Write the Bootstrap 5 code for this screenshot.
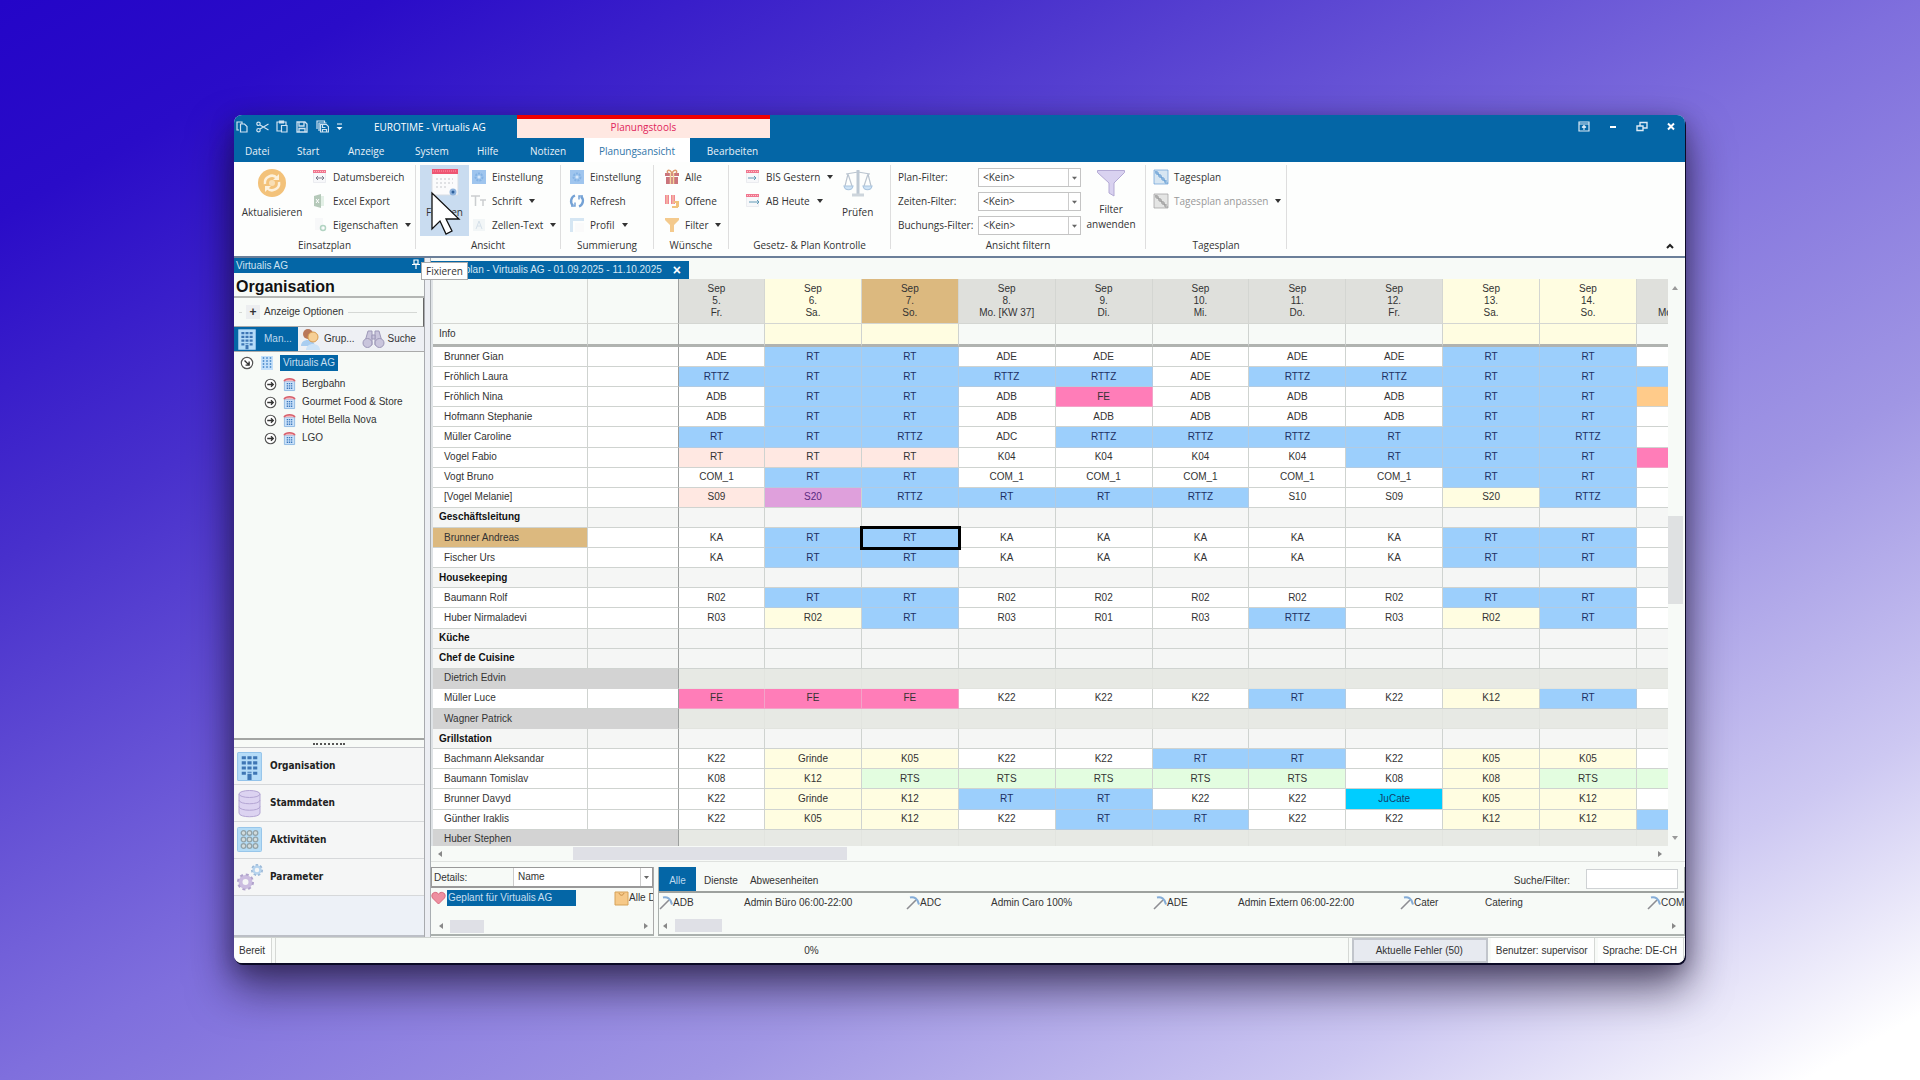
<!DOCTYPE html>
<html lang="de">
<head>
<meta charset="utf-8">
<meta name="viewport" content="width=device-width, initial-scale=1">
<title>EUROTIME - Virtualis AG</title>
<link href="https://cdn.jsdelivr.net/npm/bootstrap@5.3.0/dist/css/bootstrap.min.css" rel="stylesheet">
<style>
:root{--blue:#0466a6;--paper:#f7faf7;--rule:#cfd3d0;--ui:"Open Sans","Noto Sans",sans-serif;--app:"Liberation Sans",Arial,sans-serif}
body{min-height:100vh;height:100vh;padding:115px 235px 117px 234px;overflow:hidden;font:10px/14px var(--ui);color:#333;
 background:linear-gradient(to bottom right,#2405c8 0%,#2a0cc8 10%,#4830cc 26%,#7f6fdd 50%,#a096e4 68%,#cdc8f2 84%,#fff 97%)}
button{font:inherit;color:inherit;border:0;background:none;padding:0}
a{color:inherit;text-decoration:none}
svg{display:block;flex:none}
.win{height:100%;border-radius:8px;background:var(--paper);box-shadow:1px 2px 0 0 #0b0a26,0 24px 44px 2px rgba(20,12,40,.6),0 6px 22px rgba(20,12,40,.35)}
.clip{height:100%;border-radius:8px;overflow:hidden}
.titlebar{height:23px;background:var(--blue);color:#fff}
.quick{width:140px;padding-left:2px;gap:4px}
.quick button{width:16px}
.ctx{width:253px;height:23px;border-top:4px solid #f00000;background:#ffe8e2;color:#e0245c;line-height:16px;margin-left:31px}
.winbtns{gap:13px;padding-right:4px}
.winbtns button{width:16px}
.menus{height:24px;background:var(--blue);color:#e8f1f8;padding-left:11px}
.menus a{line-height:26px}
.menus .on{background:#fff;color:#2f75a8}
.ribbon{height:96px;background:#fdfefd;border-bottom:2px solid #6b7f99;padding-top:3px;color:#333}
.grp{border-right:1px solid #dedede;height:84px}
.grp>.tools{height:73px}
.sm-tool{height:24px;gap:5px;white-space:nowrap}
.sm-tool svg{opacity:.85}
.sm-tool .dn{margin-left:2px}
.big-tool{height:71px;padding-top:3px;line-height:15px;gap:7px}
.dn{width:0;height:0;border:3px solid transparent;border-top:4px solid #333;border-bottom:0;display:inline-block}
.hot{background:#c9dcf0}
.pick{height:19px;width:103px;border:1px solid #c4c4c4;border-radius:0;padding:0 0 0 4px;font:10px/14px var(--ui);color:#333;appearance:none;
 background:#fff url("data:image/svg+xml,%3Csvg xmlns='http://www.w3.org/2000/svg' width='12' height='18'%3E%3Cpath d='M.5 0v18' stroke='%23ccc'/%3E%3Cpath d='M4 8h5l-2.500 3z' fill='%23666'/%3E%3C/svg%3E") right center no-repeat}
.work{font-family:var(--app);line-height:12px}
.side{width:191px;border-right:1px solid #a8aaae}
.strip{height:15px;background:var(--blue);color:#cfe3f2;padding-left:2px;line-height:15px}
.side h1{font:bold 16px/27px var(--app);color:#111;height:25px;padding-left:2px;margin:0;border-bottom:2px solid #b4b6b4}
.opts{height:29px;border-right:1px solid #666;border-bottom:1px solid #aaa;padding:0 6px 0 5px;gap:4px}
.opts i{height:1px;background:#d5d8d5}
.plus{width:14px;height:14px;background:#eceef0;font:bold 12px/13px var(--app)}
.ptabs{height:25px;background:#eef0f4;border-bottom:1px solid #aaa}
.ptabs .on{background:var(--blue);color:#bcd9ef}
.tree{border-bottom:2px solid #a3a5a3;padding-top:2px}
.tree .node{height:18px;gap:6px;padding-left:30px}
.tree .root{padding-left:6px}
.sel{background:var(--blue);color:#c7dff0}
.grip{height:8px;border-bottom:1px solid #c5c7ca}
.grip i{width:32px;border-top:2px dotted #555}
.nav4 a{height:37px;border-bottom:1px solid #d6d8da;background:#f5f6f6;font:bold 10px/14px "DejaVu Sans Condensed","DejaVu Sans",sans-serif;color:#222;padding-left:3px;gap:8px}
.nav-rest{background:#edf1f7;border-bottom:2px solid #bcbfc6}
.gutter{width:6px;background:#eceef3;border-right:1px solid #a9aeb2}
.doctab{height:18px;background:var(--blue);color:#d5e6f3;padding:0 8px 0 1px;gap:11px}
.doctab .close{font:bold 14px/12px var(--app);color:#fff}
.sheet{overflow:hidden;border-left:2px solid #dfe3e6}
.plan{table-layout:fixed;width:100%;height:571px;border-collapse:separate;border-spacing:0}
.plan th,.plan td{border-right:1px solid var(--rule);border-bottom:1px solid var(--rule);padding:0;font-weight:400;overflow:hidden;white-space:nowrap;text-align:center;line-height:12px}
.plan td{background:#fff}
.plan .dayhead th{height:45px;background:#dfe0dc;line-height:12px;padding-bottom:1px;border-color:#d4d6d2}
.plan .dayhead th.side-h{background:var(--paper)}
.plan .dayhead th.we,.plan .info .we{background:#fffde1}
.plan .dayhead th.today{background:#dcb97f}
.plan .info>*{height:23px;border-bottom:3px solid #b0b3b0;background:var(--paper)}
.plan th[scope=row],.plan .info th{text-align:left;padding-left:11px;background:#fff}
.plan .info th{padding-left:6px;background:var(--paper)}
.plan tr>*:nth-child(2){border-right-color:#9da09f}
.plan tr>*:nth-child(3){padding-right:10px}
.plan tr>*:last-child{border-right:0}
.plan .team>*{background:#f5f6f5}
.plan .team th[scope=row]{background:#f5f6f5;font-weight:700;padding-left:6px;color:#111}
.plan .off th[scope=row],.plan .off td:nth-child(2){background:#d3d3d3;border-color:#d3d3d3}
.plan .off td{background:#e7e9e4;border-color:#e2e4df}
.plan .off td:nth-child(2){border-right-color:#9da09f}
.plan .mine th[scope=row]{background:#dcb97f}
.plan td.b{background:#9ccffc;border-color:#b2cbe2;color:#1c2f63}
.plan td.y{background:#fffde1}
.plan td.p{background:#ffe8e2}
.plan td.f{background:#ff7db8;border-color:#f3a3c8}
.plan td.v{background:#dfa0dc;color:#5b2a80}
.plan td.g{background:#e3fde0}
.plan td.c{background:#00cdff;color:#10406a}
.plan td.o{background:#ffcb8a}
.plan td.cur{outline:3px solid #000;outline-offset:-1px;position:relative}
.wide{width:97px}
.vbar{width:17px}
.vbar .top{height:237px;padding-top:7px}
.thumb{background:#dfe0e6}
.vbar .thumb{height:88px;width:15px;background:#dfe1e2}
.vbar .bot{padding-bottom:6px}
.hbar{height:16px;border-bottom:1px solid #dfe2df}
.tri{width:0;height:0;border:3px solid transparent;flex:none}
.tl{border-right:4px solid #888;border-left:0}.tr{border-left:4px solid #888;border-right:0}
.tu{border-bottom:4px solid #999;border-top:0}.td{border-top:4px solid #999;border-bottom:0}
.lower{height:69px;margin-top:5px;gap:4px}
.details{width:223px;border-bottom:2px solid #aab0ad;border-right:1px solid #aaa}
.dhead{height:21px;border:1px solid #999;border-bottom-width:2px}
.dhead label{width:82px;padding-left:2px;border-right:1px solid #ccc;line-height:19px}
.dhead .pick{border:0;height:18px;font-family:var(--app)}
.dlist{height:20px;overflow:hidden;white-space:nowrap}
.dlist .sel{width:129px;padding-left:1px;height:16px;line-height:16px;flex:none}
.codes{border:1px solid #aab0ad;border-top:0;border-bottom-width:2px}
.ctabs{height:26px;border-bottom:2px solid #9da19e}
.ctabs>button,.ctabs>label{padding-top:3px}
.ctabs .on{background:var(--blue);color:#bcd9ef;width:37px}
.find{width:92px;height:20px;border:1px solid #cfd2d4;background:#fff;font:10px/14px var(--app)}
.clist{height:20px;overflow:hidden;white-space:nowrap}
.code{width:247px;flex:none}
.code b{width:71px;font-weight:400}
.status{height:26px;border-top:1px solid #cfd3d0;font-family:var(--app);gap:3px;padding-right:1px}
.status>*{background:#fdfefd;border-right:1px solid #d5d8d5;padding:0 6px 0 5px;line-height:26px}
.status .prog{background:var(--paper);border-left:1px solid #d5d8d5}
.status .err{background:#e7eaf0;border:2px solid #c1c5cb;width:136px;line-height:21px}
.tip{position:absolute;left:421px;top:262px;background:#fff;border:1px solid #aaa;padding:1px 4px;z-index:5}
.pointer{position:absolute;left:430px;top:190px;z-index:6}
</style>
<script src="https://cdn.jsdelivr.net/npm/bootstrap@5.3.0/dist/js/bootstrap.bundle.min.js"></script>
</head>
<body>
<svg width="0" height="0" class="position-absolute">
 <defs>
  <symbol id="cal" viewBox="0 0 16 16"><path d="M1.500 3.500h12v10h-12z" fill="#f7f8fa" stroke="#e3e6ea" stroke-width=".8"/><path d="M1 1h13v3H1z" fill="#ee5f7d"/><path d="M2 2.500h11" stroke="#fbb" stroke-dasharray="1 1"/></symbol>
  <symbol id="gearbox" viewBox="0 0 16 16"><path d="M1 1h14v14H1z" fill="#8fbcec"/><circle cx="8" cy="8" r="3.500" fill="none" stroke="#6fa5e0" stroke-width="2" stroke-dasharray="2 1"/><circle cx="8" cy="8" r="1.500" fill="#cfe4fa"/></symbol>
  <symbol id="house" viewBox="0 0 14 16"><path d="M1.500 4.500h11v10h-11z" fill="#c9e0f8" stroke="#8fb9e2"/><path d="M1 4.500C3 1 11 1 13 4.500" fill="#f3b5bb" stroke="#d8606c" stroke-width="1.500"/><path d="M4 7h6M4 9.500h6M4 12h6" stroke="#3b78bd" stroke-width="1.500" stroke-dasharray="1.500 .8"/></symbol>
  <symbol id="tower" viewBox="0 0 24 28"><rect x=".5" y=".5" width="23" height="27" rx="1" fill="#b5dcf8" stroke="#93c3ea"/><path d="M6.500 4v20M12 4v16M17.500 4v20" stroke="#3e76b4" stroke-width="4" stroke-dasharray="3 2"/><path d="M10 21h4v6h-4z" fill="#3e76b4"/></symbol>
  <symbol id="go" viewBox="0 0 14 14"><circle cx="7" cy="7" r="5.700" fill="#fff" stroke="#555" stroke-width="1.200"/><path d="M3.500 7h6.500M7.500 4.500L10 7 7.500 9.500" fill="none" stroke="#333" stroke-width="1.400"/></symbol>
  <symbol id="axe" viewBox="0 0 14 14"><path d="M1 13L10 4" stroke="#8d8d92" stroke-width="1.600"/><path d="M4 1.500c4-1 8 1 9 7" fill="none" stroke="#85add8" stroke-width="2"/></symbol>
  <symbol id="steps" viewBox="0 0 16 16"><path d="M1 1h14v14H1z" fill="currentColor" fill-opacity=".25" stroke="currentColor" stroke-opacity=".7"/><path d="M3 2v3h3v3h3v3h3v3h3M2 3h3v3h3v3h3v3h3" fill="none" stroke="currentColor"/></symbol>
 </defs>
</svg>

<div class="win"><div class="clip d-flex flex-column">
 <header class="titlebar d-flex align-items-center flex-shrink-0">
  <div class="quick d-flex align-items-center">
   <button aria-label="Kopieren"><svg width="12" height="12" fill="none" stroke="#cfe2f1" stroke-width="1.200"><path d="M3 9H1V1h5v2M4.500 3h4l2.500 2.500V11H4.500z"/></svg></button>
   <button aria-label="Ausschneiden"><svg width="13" height="12" fill="none" stroke="#cfe2f1" stroke-width="1.200"><circle cx="2.500" cy="2.800" r="1.700"/><circle cx="2.500" cy="9.200" r="1.700"/><path d="M4 4l8.500 5M4 8l8.500-5"/></svg></button>
   <button aria-label="Einfügen"><svg width="12" height="13" fill="none" stroke="#cfe2f1" stroke-width="1.200"><path d="M5 11H1V2h9v3M3.500 1h4v2h-4zM5.500 5.500H11V12H5.500z"/></svg></button>
   <button aria-label="Speichern"><svg width="12" height="12" fill="none" stroke="#cfe2f1" stroke-width="1.300"><path d="M1 1h8l2 2v8H1zM3 1v4h5V1M3 11V7.500h6V11"/></svg></button>
   <button aria-label="Alle speichern"><svg width="13" height="13" fill="none" stroke="#cfe2f1" stroke-width="1.200"><path d="M1 9V1h7.500v1.500M3 11V3h7.500M4.500 4.500h6l2 2V12h-8zM6.500 5v2.500h3M6.500 12V9.500h4V12"/></svg></button>
   <button aria-label="Mehr"><svg width="7" height="8"><path d="M1 1h5" stroke="#fff"/><path d="M.5 4h6l-3 3z" fill="#fff"/></svg></button>
  </div>
  <span>EUROTIME - Virtualis AG</span>
  <div class="ctx text-center">Planungstools</div>
  <div class="winbtns d-flex align-items-center ms-auto">
   <button aria-label="Menüband"><svg width="12" height="11" fill="none" stroke="#dceaf5" stroke-width="1.200"><path d="M1 1h10v9H1zM1 3h10M6 9V5M4 6.500l2-2 2 2"/></svg></button>
   <button aria-label="Minimieren"><svg width="12" height="11"><path d="M3 6h6" stroke="#fff" stroke-width="2"/></svg></button>
   <button aria-label="Wiederherstellen"><svg width="12" height="11" fill="none" stroke="#dceaf5" stroke-width="1.400"><path d="M1 5h6v4.500H1zM4 5V1.500h7V7H7"/></svg></button>
   <button aria-label="Schliessen"><svg width="12" height="11"><path d="M3 2.500l6 6M9 2.500l-6 6" stroke="#fff" stroke-width="2"/></svg></button>
  </div>
 </header>
 <nav class="menus d-flex flex-shrink-0" id="menus"></nav>

 <section class="ribbon d-flex flex-shrink-0">
  <div class="grp" style="width:182px">
   <div class="tools d-flex">
    <button class="big-tool d-flex flex-column align-items-center" style="width:76px"><svg width="30" height="30"><circle cx="15" cy="15" r="14" fill="#f3c27a"/><path d="M8 16a7 7 0 0 1 12-6M22 14a7 7 0 0 1-12 6" fill="none" stroke="#fdf1dc" stroke-width="2.500"/><path d="M22 6v6h-6zM8 24v-6h6z" fill="#fdf1dc"/><circle cx="15" cy="15" r="3" fill="#f9dfb5"/></svg>Aktualisieren</button>
    <div class="ps-1" style="margin-left:-2px">
     <button class="sm-tool d-flex align-items-center"><svg width="16" height="16"><use href="#cal"/><path d="M4 9h8M6 7L4 9l2 2M10 7l2 2-2 2" fill="none" stroke="#667"/></svg>Datumsbereich</button>
     <button class="sm-tool d-flex align-items-center"><svg width="16" height="16"><path d="M2 3l7-2v14l-7-2z" fill="#a9c0ae"/><path d="M9 3h3v10H9z" fill="#dfeee2"/><path d="M4 6l3 4M7 6l-3 4" stroke="#fff"/></svg>Excel Export</button>
     <button class="sm-tool d-flex align-items-center"><svg width="16" height="16"><path d="M3 1h8v12H3z" fill="#f6f8f9"/><circle cx="11" cy="11" r="2.500" fill="none" stroke="#a5cdb9" stroke-width="1.500"/></svg>Eigenschaften <i class="dn"></i></button>
    </div>
   </div><div class="text-center">Einsatzplan</div>
  </div>
  <div class="grp" style="width:145px">
   <div class="tools d-flex ps-1">
    <button class="big-tool hot d-flex flex-column align-items-center" style="width:49px"><svg width="28" height="30"><path d="M1 2h26v25H1z" fill="#fbfbfc" stroke="#d8dde4"/><path d="M1 1h26v5H1z" fill="#ee5573"/><path d="M2 3h24" stroke="#f9a" stroke-dasharray="1 1"/><path d="M5 11h17M5 15h17M5 19h12" stroke="#e0e1e4" stroke-width="2" stroke-dasharray="2 2"/><circle cx="22" cy="24" r="3.500" fill="#8fb3dd"/><circle cx="22" cy="24" r="1.500" fill="#2d5f9b"/></svg>Fixieren</button>
    <div style="padding-left:2px">
     <button class="sm-tool d-flex align-items-center"><svg width="16" height="16"><use href="#gearbox"/></svg>Einstellung</button>
     <button class="sm-tool d-flex align-items-center"><svg width="16" height="16" fill="none" stroke="#c3c6c9" stroke-width="1.500"><path d="M0 3h9M4.500 3v10M9 7h6M12 7v6"/></svg>Schrift <i class="dn"></i></button>
     <button class="sm-tool d-flex align-items-center"><svg width="16" height="16"><path d="M2 2h12v12H2z" fill="#f1f5f7"/><path d="M5 12l3-8 3 8M6 9h4" fill="none" stroke="#cfdce6"/></svg>Zellen-Text <i class="dn"></i></button>
    </div>
   </div><div class="text-center">Ansicht</div>
  </div>
  <div class="grp" style="width:93px">
   <div class="tools ps-2">
    <button class="sm-tool d-flex align-items-center"><svg width="16" height="16"><use href="#gearbox"/></svg>Einstellung</button>
    <button class="sm-tool d-flex align-items-center"><svg width="16" height="16" fill="none" stroke="#5d92cf" stroke-width="2.400"><path d="M6 2.500a6 6 0 0 0-2 10M10 13.500a6 6 0 0 0 2-10"/><path d="M2 13h4V9.500M14 3h-4v3.500" stroke-width="1.500"/></svg>Refresh</button>
    <button class="sm-tool d-flex align-items-center"><svg width="16" height="16"><path d="M1 15V1h14v3H4v11z" fill="#cfe2f2"/><path d="M6 6h9v9H6z" fill="#fafafa"/></svg>Profil <i class="dn"></i></button>
   </div><div class="text-center">Summierung</div>
  </div>
  <div class="grp" style="width:75px">
   <div class="tools" style="padding-left:10px">
    <button class="sm-tool d-flex align-items-center"><svg width="16" height="16"><path d="M1 4h14v3H1zM2 8h12v7H2z" fill="#c25c66"/><path d="M6.500 4v11M9.500 4v11" stroke="#f2cf8c" stroke-width="1.500"/><path d="M8 4C5-1 2 2 4 4M8 4c3-5 6-2 4 0" fill="none" stroke="#d98a55" stroke-width="1.500"/></svg>Alle</button>
    <button class="sm-tool d-flex align-items-center"><svg width="16" height="16"><path d="M1 2h4v9H1zM7 2h4v9H7z" fill="#ee7285"/><path d="M3 2v9M9 2v9" stroke="#f7d39a"/><path d="M10 9h3v5h-5M14 8v6" fill="none" stroke="#f0b866" stroke-width="2"/></svg>Offene</button>
    <button class="sm-tool d-flex align-items-center"><svg width="16" height="16"><path d="M1 1h14v2l-5 5v7H6V8L1 3z" fill="#f3c27a"/></svg>Filter <i class="dn"></i></button>
   </div><div class="text-center">Wünsche</div>
  </div>
  <div class="grp" style="width:162px">
   <div class="tools d-flex justify-content-between ps-3 pe-2">
    <div>
     <button class="sm-tool d-flex align-items-center"><svg width="16" height="16"><use href="#cal"/><path d="M3 9h8M9 7l2 2-2 2" fill="none" stroke="#48a"/></svg>BIS Gestern <i class="dn"></i></button>
     <button class="sm-tool d-flex align-items-center"><svg width="16" height="16"><use href="#cal"/><path d="M4 9h10M12 7l2 2-2 2" fill="none" stroke="#48a"/></svg>AB Heute <i class="dn"></i></button>
    </div>
    <button class="big-tool d-flex flex-column align-items-center" style="width:54px"><svg width="30" height="30" fill="none" stroke="#bac4cf" stroke-width="1.200"><path d="M3 6l12-2 12 2M5 6L2 18M5 6l4 12M25 6l-4 12M25 6l3 12"/><path d="M15 2v25" stroke-width="3" stroke="#bdc8d3"/><path d="M9 27h12" stroke-width="3" stroke="#cdd5dc"/><path d="M1 18h9c-1 5-8 5-9 0zM20 18h9c-1 5-8 5-9 0z" fill="#cfe4f6" stroke="#a9c4de"/></svg>Prüfen</button>
   </div><div class="text-center">Gesetz- &amp; Plan Kontrolle</div>
  </div>
  <div class="grp" style="width:255px">
   <div class="tools d-flex" style="padding-left:7px">
    <div class="flex-shrink-0" style="width:183px">
     <div class="sm-tool d-flex align-items-center justify-content-between"><label for="f1">Plan-Filter:</label><select id="f1" class="pick"><option>&lt;Kein&gt;</option></select></div>
     <div class="sm-tool d-flex align-items-center justify-content-between"><label for="f2">Zeiten-Filter:</label><select id="f2" class="pick"><option>&lt;Kein&gt;</option></select></div>
     <div class="sm-tool d-flex align-items-center justify-content-between"><label for="f3">Buchungs-Filter:</label><select id="f3" class="pick"><option>&lt;Kein&gt;</option></select></div>
    </div>
    <button class="big-tool d-flex flex-column align-items-center gap-1 pe-1 flex-grow-1"><svg width="30" height="30"><path d="M1.500 2.500h27v2L18 15v13l-5-3V15L1.500 4.500z" fill="#d9d2f0" stroke="#b3a9d4"/></svg><span>Filter<br>anwenden</span></button>
   </div><div class="text-center">Ansicht filtern</div>
  </div>
  <div class="grp" style="width:141px">
   <div class="tools" style="padding-left:7px">
    <button class="sm-tool d-flex align-items-center"><svg width="16" height="16" color="#4f8fce"><use href="#steps"/></svg>Tagesplan</button>
    <button class="sm-tool d-flex align-items-center" style="color:#999"><svg width="16" height="16" color="#8b8b8b"><use href="#steps"/></svg>Tagesplan anpassen <i class="dn"></i></button>
   </div><div class="text-center">Tagesplan</div>
  </div>
  <button class="ms-auto align-self-end pe-2" style="padding-bottom:6px" aria-label="Menüband einklappen"><svg width="14" height="8"><path d="M4 6l3-3 3 3" fill="none" stroke="#222" stroke-width="2"/></svg></button>
 </section>

 <div class="work d-flex flex-grow-1" style="min-height:0">
  <aside class="side d-flex flex-column flex-shrink-0">
   <div class="strip d-flex justify-content-between pe-1">Virtualis AG<svg width="8" height="12" fill="none" stroke="#fff" stroke-width="1.200"><path d="M2 2h4v4H2zM0 6.500h8M4 7v4"/></svg></div>
   <h1>Organisation</h1>
   <div class="opts d-flex align-items-center"><i style="width:3px"></i><button class="plus" aria-label="Öffnen">+</button><span>Anzeige Optionen</span><i class="flex-grow-1"></i></div>
   <div class="ptabs d-flex">
    <button class="on d-flex align-items-center gap-2 ps-1 flex-shrink-0" style="width:64px"><svg width="18" height="21"><use href="#tower"/></svg>Man...</button>
    <button class="d-flex align-items-center flex-shrink-0" style="gap:3px;padding-left:3px"><svg width="20" height="22"><circle cx="7" cy="6" r="5" fill="#b9785a"/><path d="M0 18c0-8 13-8 14 0z" fill="#a9cdf0"/><circle cx="12" cy="9" r="5" fill="#f6cf96" stroke="#d79b50"/><path d="M5 22c0-8 14-8 14 0z" fill="#cde3f7"/></svg>Grup...</button>
    <button class="d-flex align-items-center flex-shrink-0" style="gap:3px;padding-left:7px"><svg width="23" height="20" fill="#c9c5dc" stroke="#9d98b8"><path d="M6 2h4v14H2zM17 2h-4v14h8z"/><circle cx="5.500" cy="14" r="4.500"/><circle cx="17.500" cy="14" r="4.500"/><path d="M10 6h3v4h-3z"/></svg>Suche</button>
   </div>
   <div class="tree flex-grow-1">
    <div class="node root d-flex align-items-center"><svg width="14" height="14"><g transform="rotate(45 7 7)"><use href="#go"/></g></svg><svg width="14" height="16"><path d="M1 1h12v14H1z" fill="#c4e0fa"/><path d="M3.500 2v11M7 2v11M10.500 2v11" stroke="#5c97d2" stroke-width="1.500" stroke-dasharray="2 1"/></svg><a href="#" class="sel" style="line-height:16px;padding:0 3px">Virtualis AG</a></div>
    <div class="node d-flex align-items-center" style="margin-top:3px"><svg width="13" height="13"><use href="#go"/></svg><svg width="13" height="15"><use href="#house"/></svg><a href="#">Bergbahn</a></div>
    <div class="node d-flex align-items-center"><svg width="13" height="13"><use href="#go"/></svg><svg width="13" height="15"><use href="#house"/></svg><a href="#">Gourmet Food &amp; Store</a></div>
    <div class="node d-flex align-items-center"><svg width="13" height="13"><use href="#go"/></svg><svg width="13" height="15"><use href="#house"/></svg><a href="#">Hotel Bella Nova</a></div>
    <div class="node d-flex align-items-center"><svg width="13" height="13"><use href="#go"/></svg><svg width="13" height="15"><use href="#house"/></svg><a href="#">LGO</a></div>
   </div>
   <div class="grip d-flex justify-content-center align-items-center"><i></i></div>
   <nav class="nav4">
    <a href="#" class="d-flex align-items-center"><svg width="25" height="29"><use href="#tower"/></svg>Organisation</a>
    <a href="#" class="d-flex align-items-center"><svg width="25" height="29" fill="#dcd3f1" stroke="#b3a5d3"><path d="M2 5v19c0 5 21 5 21 0V5"/><ellipse cx="12.500" cy="5" rx="10.500" ry="3.500"/><path d="M2 11c0 5 21 5 21 0M2 17.500c0 5 21 5 21 0" fill="none"/></svg>Stammdaten</a>
    <a href="#" class="d-flex align-items-center"><svg width="25" height="26"><rect x=".5" y=".5" width="24" height="24" rx="1" fill="#b4dcf6" stroke="#98c6ea"/><g fill="#d3dcdc" stroke="#93a3a8" stroke-width="1.300"><circle cx="6.500" cy="6" r="2.300"/><circle cx="12.500" cy="6" r="2.300"/><circle cx="18.500" cy="6" r="2.300"/><circle cx="6.500" cy="12.500" r="2.300"/><circle cx="12.500" cy="12.500" r="2.300"/><circle cx="18.500" cy="12.500" r="2.300"/><circle cx="6.500" cy="19" r="2.300"/><circle cx="12.500" cy="19" r="2.300"/><circle cx="18.500" cy="19" r="2.300"/></g></svg>Aktivitäten</a>
    <a href="#" class="d-flex align-items-center"><svg width="27" height="28" fill="none" style="margin-right:-2px"><circle cx="8.500" cy="19" r="5" stroke="#cbbde0" stroke-width="4"/><circle cx="8.500" cy="19" r="7.500" stroke="#b0a2cc" stroke-width="2" stroke-dasharray="3 2.900"/><circle cx="20" cy="7" r="3.500" stroke="#b5d3ee" stroke-width="2.500"/><circle cx="20" cy="7" r="5.200" stroke="#9bb9d8" stroke-width="1.600" stroke-dasharray="2.500 2"/></svg>Parameter</a>
   </nav>
   <div class="nav-rest" style="height:41px"></div>
  </aside>
  <div class="gutter flex-shrink-0"></div>
  <main class="flex-grow-1 d-flex flex-column" style="min-width:0">
   <div class="d-flex flex-shrink-0" style="height:21px;padding-top:3px"><div class="doctab d-flex align-items-center">Einsatzplan - Virtualis AG - 01.09.2025 - 11.10.2025<button class="close" aria-label="Schliessen">×</button></div></div>
   <div class="d-flex flex-grow-1" style="min-height:0">
    <div class="sheet flex-grow-1">
     <table class="plan">
      <colgroup><col style="width:155px"><col style="width:91px"><col style="width:86px"><col><col><col><col><col><col><col><col><col><col style="width:31px"></colgroup>
      <thead id="head"></thead>
      <tbody id="rows"></tbody>
     </table>
    </div>
    <div class="vbar d-flex flex-column flex-shrink-0"><div class="top"><div class="tri tu ms-1"></div></div><div class="thumb"></div><div class="bot mt-auto"><div class="tri td ms-1"></div></div></div>
   </div>
   <div class="hbar d-flex align-items-center flex-shrink-0" style="padding-left:7px"><i class="tri tl"></i><i class="thumb" style="width:274px;height:13px;margin-left:131px"></i><i class="tri tr ms-auto" style="margin-right:23px"></i></div>
   <div class="lower d-flex flex-shrink-0">
    <section class="details d-flex flex-column flex-shrink-0">
     <div class="dhead d-flex"><label for="by">Details:</label><select id="by" class="pick flex-grow-1"><option>Name</option></select></div>
     <div class="dlist d-flex align-items-center"><svg width="16" height="14"><path d="M7.500 13L1.500 7C-1 3 4-1 7.500 3 11-1 16 3 13.500 7z" fill="#ee8fa0" stroke="#d86a7e"/></svg><span class="sel">Geplant für Virtualis AG</span><svg style="margin-left:38px" width="15" height="15"><path d="M1 1h13v13H1z" fill="#f6c989" stroke="#d6a258"/><path d="M5 2c1 3 4 3 5 0" fill="none" stroke="#c98f45"/></svg><span>Alle D</span></div>
     <div class="d-flex align-items-center mt-auto ps-1" style="height:16px"><i class="tri tl ms-1"></i><i class="thumb" style="width:34px;height:13px;margin-left:7px"></i><i class="tri tr ms-auto" style="margin-right:5px"></i></div>
    </section>
    <section class="codes flex-grow-1 d-flex flex-column" style="min-width:0">
     <div class="ctabs d-flex align-items-center flex-shrink-0">
      <button class="on h-100">Alle</button><button class="ps-2 pe-1">Dienste</button><button class="ps-2">Abwesenheiten</button>
      <label for="find" class="ms-auto me-3">Suche/Filter:</label><input id="find" class="find" style="margin-right:6px">
     </div>
     <div class="clist d-flex" id="codes"></div>
     <div class="d-flex align-items-center mt-auto px-1" style="height:17px"><i class="tri tl"></i><i class="thumb" style="width:47px;height:13px;margin-left:8px"></i><i class="tri tr ms-auto me-1"></i></div>
    </section>
   </div>
   <div class="flex-shrink-0" style="height:1px"></div>
  </main>
 </div>
 <footer class="status d-flex flex-shrink-0"><span>Bereit</span><span class="prog flex-grow-1 text-center">0%</span><button class="err">Aktuelle Fehler (50)</button><span>Benutzer: supervisor</span><span>Sprache: DE-CH</span></footer>
</div></div>
<div class="tip">Fixieren</div>
<svg class="pointer" width="32" height="46"><path d="M2 3v36l8-8 6 13 6-3-6-12h13z" fill="#fff" stroke="#111" stroke-width="1.300"/></svg>

<script>
// Menu entries: label, width
const menus=[["Datei",52],["Start",51],["Anzeige",67],["System",62],["Hilfe",53],["Notizen",54],["Planungsansicht",106,"on"],["Bearbeiten",85]];
document.getElementById("menus").innerHTML=menus.map(([t,w,c],i)=>`<a href="#" class="${c||""}${i<6?"":" text-center"}" style="width:${w}px">${t}</a>`).join("");

// Day columns of the plan
const days=[["5.","Fr."],["6.","Sa.","we"],["7.","So.","today"],["8.","Mo. [KW 37]"],["9.","Di."],["10.","Mi."],["11.","Do."],["12.","Fr."],["13.","Sa.","we"],["14.","So.","we"]];
document.getElementById("head").innerHTML=
 `<tr class="dayhead"><th class="side-h"></th><th class="side-h"></th>${days.map(d=>`<th scope="col" class="${d[2]||""}">Sep<br>${d[0]}<br>${d[1]}</th>`).join("")}<th><div class="wide">&nbsp;<br>&nbsp;<br>Mo. [KW 38]</div></th></tr>`+
 `<tr class="info"><th>Info</th><td></td>${days.map(d=>`<td class="${d[2]?"we":""}"></td>`).join("")}<td></td></tr>`;

// One line per row: name | shifts; a shift may carry a colour key after ":" ; "#" marks a team, "-" an inactive person
const plan=`Brunner Gian|ADE RT RT ADE ADE ADE ADE ADE RT RT _
Fröhlich Laura|RTTZ RT RT RTTZ RTTZ ADE RTTZ RTTZ RT RT _:b
Fröhlich Nina|ADB RT RT ADB FE ADB ADB ADB RT RT _:o
Hofmann Stephanie|ADB RT RT ADB ADB ADB ADB ADB RT RT _
Müller Caroline|RT RT RTTZ ADC RTTZ RTTZ RTTZ RT RT RTTZ _
Vogel Fabio|RT:p RT:p RT:p K04 K04 K04 K04 RT RT RT _:f
Vogt Bruno|COM_1 RT RT COM_1 COM_1 COM_1 COM_1 COM_1 RT RT _
[Vogel Melanie]|S09:p S20:v RTTZ RT RT RTTZ S10 S09 S20:y RTTZ _
#Geschäftsleitung|
*Brunner Andreas|KA RT RT:cur KA KA KA KA KA RT RT _
Fischer Urs|KA RT RT KA KA KA KA KA RT RT _
#Housekeeping|
Baumann Rolf|R02 RT RT R02 R02 R02 R02 R02 RT RT _
Huber Nirmaladevi|R03 R02:y RT R03 R01 R03 RTTZ R03 R02:y RT _
#Küche|
#Chef de Cuisine|
-Dietrich Edvin|
Müller Luce|FE FE FE K22 K22 K22 RT K22 K12:y RT _
-Wagner Patrick|
#Grillstation|
Bachmann Aleksandar|K22 Grinde:y K05:y K22 K22 RT RT K22 K05:y K05:y _
Baumann Tomislav|K08 K12:y RTS RTS RTS RTS RTS K08 K08:y RTS _:g
Brunner Davyd|K22 Grinde:y K12:y RT RT K22 K22 JuCate K05:y K12:y _
Günther Iraklis|K22 K05:y K12:y K22 RT RT K22 K22 K12:y K12:y _:b
-Huber Stephen|`.split("\n");
const tint={RT:"b",RTTZ:"b",FE:"f",RTS:"g",JuCate:"c"};
const kind={"#":"team","-":"off","*":"mine"};
document.getElementById("rows").innerHTML=plan.map(l=>{
 let [n,s]=l.split("|"),k=kind[n[0]]||"";if(k)n=n.slice(1);
 const cells=s?s.split(" "):Array(11).fill("_");
 return `<tr class="${k}"><th scope="row">${n}</th><td></td>${cells.map(c=>{let [t,q]=c.split(":");let cl=q==="cur"?"b cur":q||tint[t]||"";return `<td class="${cl}">${t==="_"?"":t}</td>`}).join("")}</tr>`}).join("");

const codes=[["ADB","Admin Büro 06:00-22:00"],["ADC","Admin Caro 100%"],["ADE","Admin Extern 06:00-22:00"],["Cater","Catering"],["COM_1",""]];
document.getElementById("codes").innerHTML=codes.map(([a,b])=>`<div class="code d-flex align-items-center"><svg width="14" height="14"><use href="#axe"/></svg><b>${a}</b>${b}</div>`).join("");
</script>
</body>
</html>
